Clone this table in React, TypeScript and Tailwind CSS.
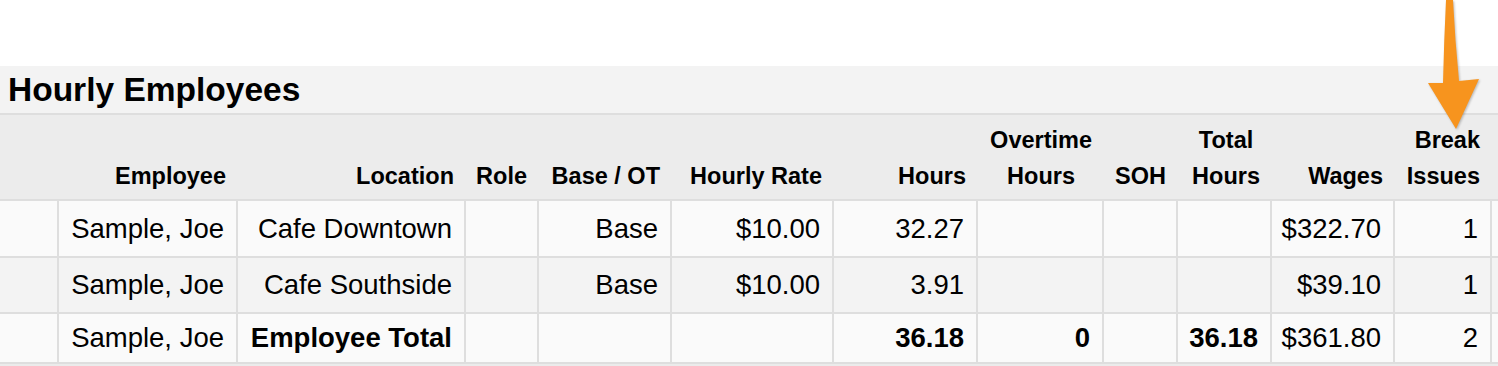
import React from 'react';

const grid =
  'grid grid-cols-[59px_179px_228px_73px_133px_162px_144px_126px_74px_94px_123px_97px_120px]';

type Row = {
  cells: string[];
  bold: boolean[];
  bg: string;
  h: string;
};

const rows: Row[] = [
  {
    cells: ['', 'Sample, Joe', 'Cafe Downtown', '', 'Base', '$10.00', '32.27', '', '', '', '$322.70', '1', ''],
    bold: [],
    bg: 'bg-[#fafafa]',
    h: 'h-[57px]',
  },
  {
    cells: ['', 'Sample, Joe', 'Cafe Southside', '', 'Base', '$10.00', '3.91', '', '', '', '$39.10', '1', ''],
    bold: [],
    bg: 'bg-[#f3f3f3]',
    h: 'h-[56px]',
  },
  {
    cells: ['', 'Sample, Joe', 'Employee Total', '', '', '', '36.18', '0', '', '36.18', '$361.80', '2', ''],
    bold: [false, false, true, false, false, false, true, true, false, true],
    bg: 'bg-[#fafafa]',
    h: 'h-[50px]',
  },
];

const Arrow = () => (
  <svg
    className="absolute left-[1420px] top-0 drop-shadow-[1px_1px_1px_rgba(0,0,0,0.25)]"
    width="70"
    height="135"
    viewBox="1420 0 70 135"
  >
    <path
      d="M1446,0 L1453,0 Q1455,40 1459,81 L1479,79 L1456,129 L1428,83 L1443,83 Q1444,40 1446,0 Z"
      fill="#f7941e"
    />
  </svg>
);

const HeaderCell = ({ lines, align = 'center' }: { lines: string[]; align?: string }) => (
  <div className="flex items-end justify-end pr-3 pb-[5px]">
    <div className={align === 'right' ? 'text-right' : 'text-center'}>
      {lines.map((l, i) => (
        <div key={i}>{l}</div>
      ))}
    </div>
  </div>
);

export default function App() {
  return (
    <div className="relative w-[1498px] h-[366px] overflow-hidden bg-white text-black font-['Liberation_Sans',Arial,sans-serif]">
      <div className="h-[66px]" />
      <div className="h-[49px] bg-[#f3f3f3] border-b-2 border-[#dedede] pl-2 text-[33.5px] font-bold leading-[47px]">
        Hourly Employees
      </div>

      <div className={`${grid} h-[86px] bg-[#ececec] border-b-2 border-[#dedede] text-[23.5px] font-bold leading-[36px]`}>
        <div />
        <HeaderCell lines={['Employee']} />
        <HeaderCell lines={['Location']} />
        <HeaderCell lines={['Role']} />
        <HeaderCell lines={['Base / OT']} />
        <HeaderCell lines={['Hourly Rate']} />
        <HeaderCell lines={['Hours']} />
        <HeaderCell lines={['Overtime', 'Hours']} />
        <HeaderCell lines={['SOH']} />
        <HeaderCell lines={['Total', 'Hours']} />
        <HeaderCell lines={['Wages']} />
        <HeaderCell lines={['Break', 'Issues']} align="right" />
        <div />
      </div>

      {rows.map((r, ri) => (
        <div key={ri} className={`${grid} ${r.h} ${r.bg} text-[27.5px]`}>
          {r.cells.map((c, ci) => (
            <div
              key={ci}
              className={`flex items-center justify-end pr-3 border-b-2 border-[#dedede] ${
                ci < r.cells.length - 1 ? 'border-r-2' : ''
              } ${r.bold[ci] ? 'font-bold' : ''}`}
            >
              {c}
            </div>
          ))}
        </div>
      ))}
      <div className="h-[4px] bg-[#ebebeb]" />

      <Arrow />
    </div>
  );
}
